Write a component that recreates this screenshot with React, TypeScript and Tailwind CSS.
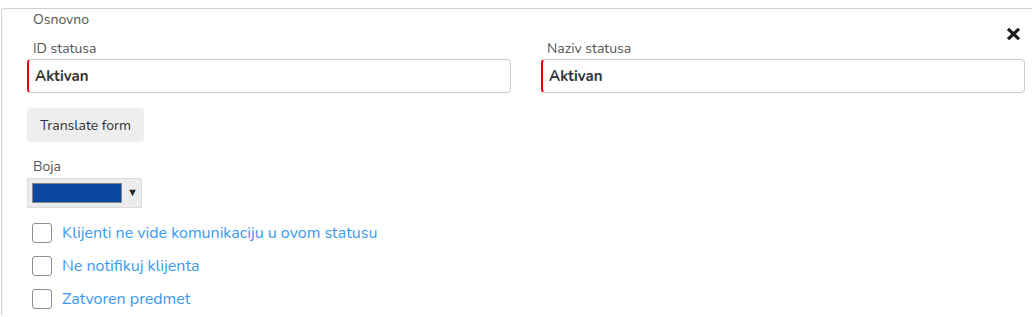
import React from "react";

const font = { fontFamily: "Nunito, Lato, 'Open Sans', sans-serif" };

function TextField({ label, value }: { label: string; value: string }) {
  return (
    <div className="flex flex-col">
      <label className="text-[14px] leading-[18px] text-[#555] pl-[6px] mb-[1px]">{label}</label>
      <div className="h-[34px] border border-[#ccc] border-l-2 border-l-[#e5000b] rounded-[4px] flex items-center pl-[6px] pt-[1px] text-[15px] font-bold text-[#333]">
        {value}
      </div>
    </div>
  );
}

function Check({ label }: { label: string }) {
  return (
    <label className="flex items-center h-[33px] pl-[5px]">
      <span className="w-[20px] h-[20px] border border-[#8f8f8f] rounded-[3px] bg-white" />
      <span className="ml-[10px] text-[16px] text-[#3a99f0]">{label}</span>
    </label>
  );
}

export default function App() {
  return (
    <div className="pt-2 pl-[1px] bg-white w-[1032px] h-[317px] overflow-hidden" style={font}>
      <div className="relative border-l border-t border-[#cfcfcf] rounded-tl-[4px] pl-[25px] pr-[7px] pt-[2px]">
        <div className="text-[14px] leading-[18px] text-[#555] pl-[6px]">Osnovno</div>
        <button className="absolute right-[11px] top-[18px] w-[15px] h-[14px]">
          <svg viewBox="0 0 15 14" width="15" height="14">
            <path d="M2 1.8 L13 12.2 M13 1.8 L2 12.2" stroke="#1a1a1a" strokeWidth="3.2" />
          </svg>
        </button>
        <div className="grid grid-cols-2 gap-[30px] mt-[11px]">
          <TextField label="ID statusa" value="Aktivan" />
          <TextField label="Naziv statusa" value="Aktivan" />
        </div>
        <button className="mt-[15px] h-[34px] w-[117px] bg-[#eee] rounded-[4px] text-[14px] text-[#333]">
          Translate form
        </button>
        <div className="mt-[15px] text-[14px] leading-[20px] text-[#555] pl-[6px]">Boja</div>
        <div className="mt-[1px] w-[115px] h-[30px] bg-[#ececec] border border-[#ddd] flex items-center pl-[4px]">
          <span className="w-[90px] h-[20px] bg-[#0b46a0] border border-[#888]" />
          <span className="ml-[5px] text-[11px] text-[#222]">▼</span>
        </div>
        <div className="mt-[8px] flex flex-col">
          <Check label="Klijenti ne vide komunikaciju u ovom statusu" />
          <Check label="Ne notifikuj klijenta" />
          <Check label="Zatvoren predmet" />
        </div>
      </div>
    </div>
  );
}
